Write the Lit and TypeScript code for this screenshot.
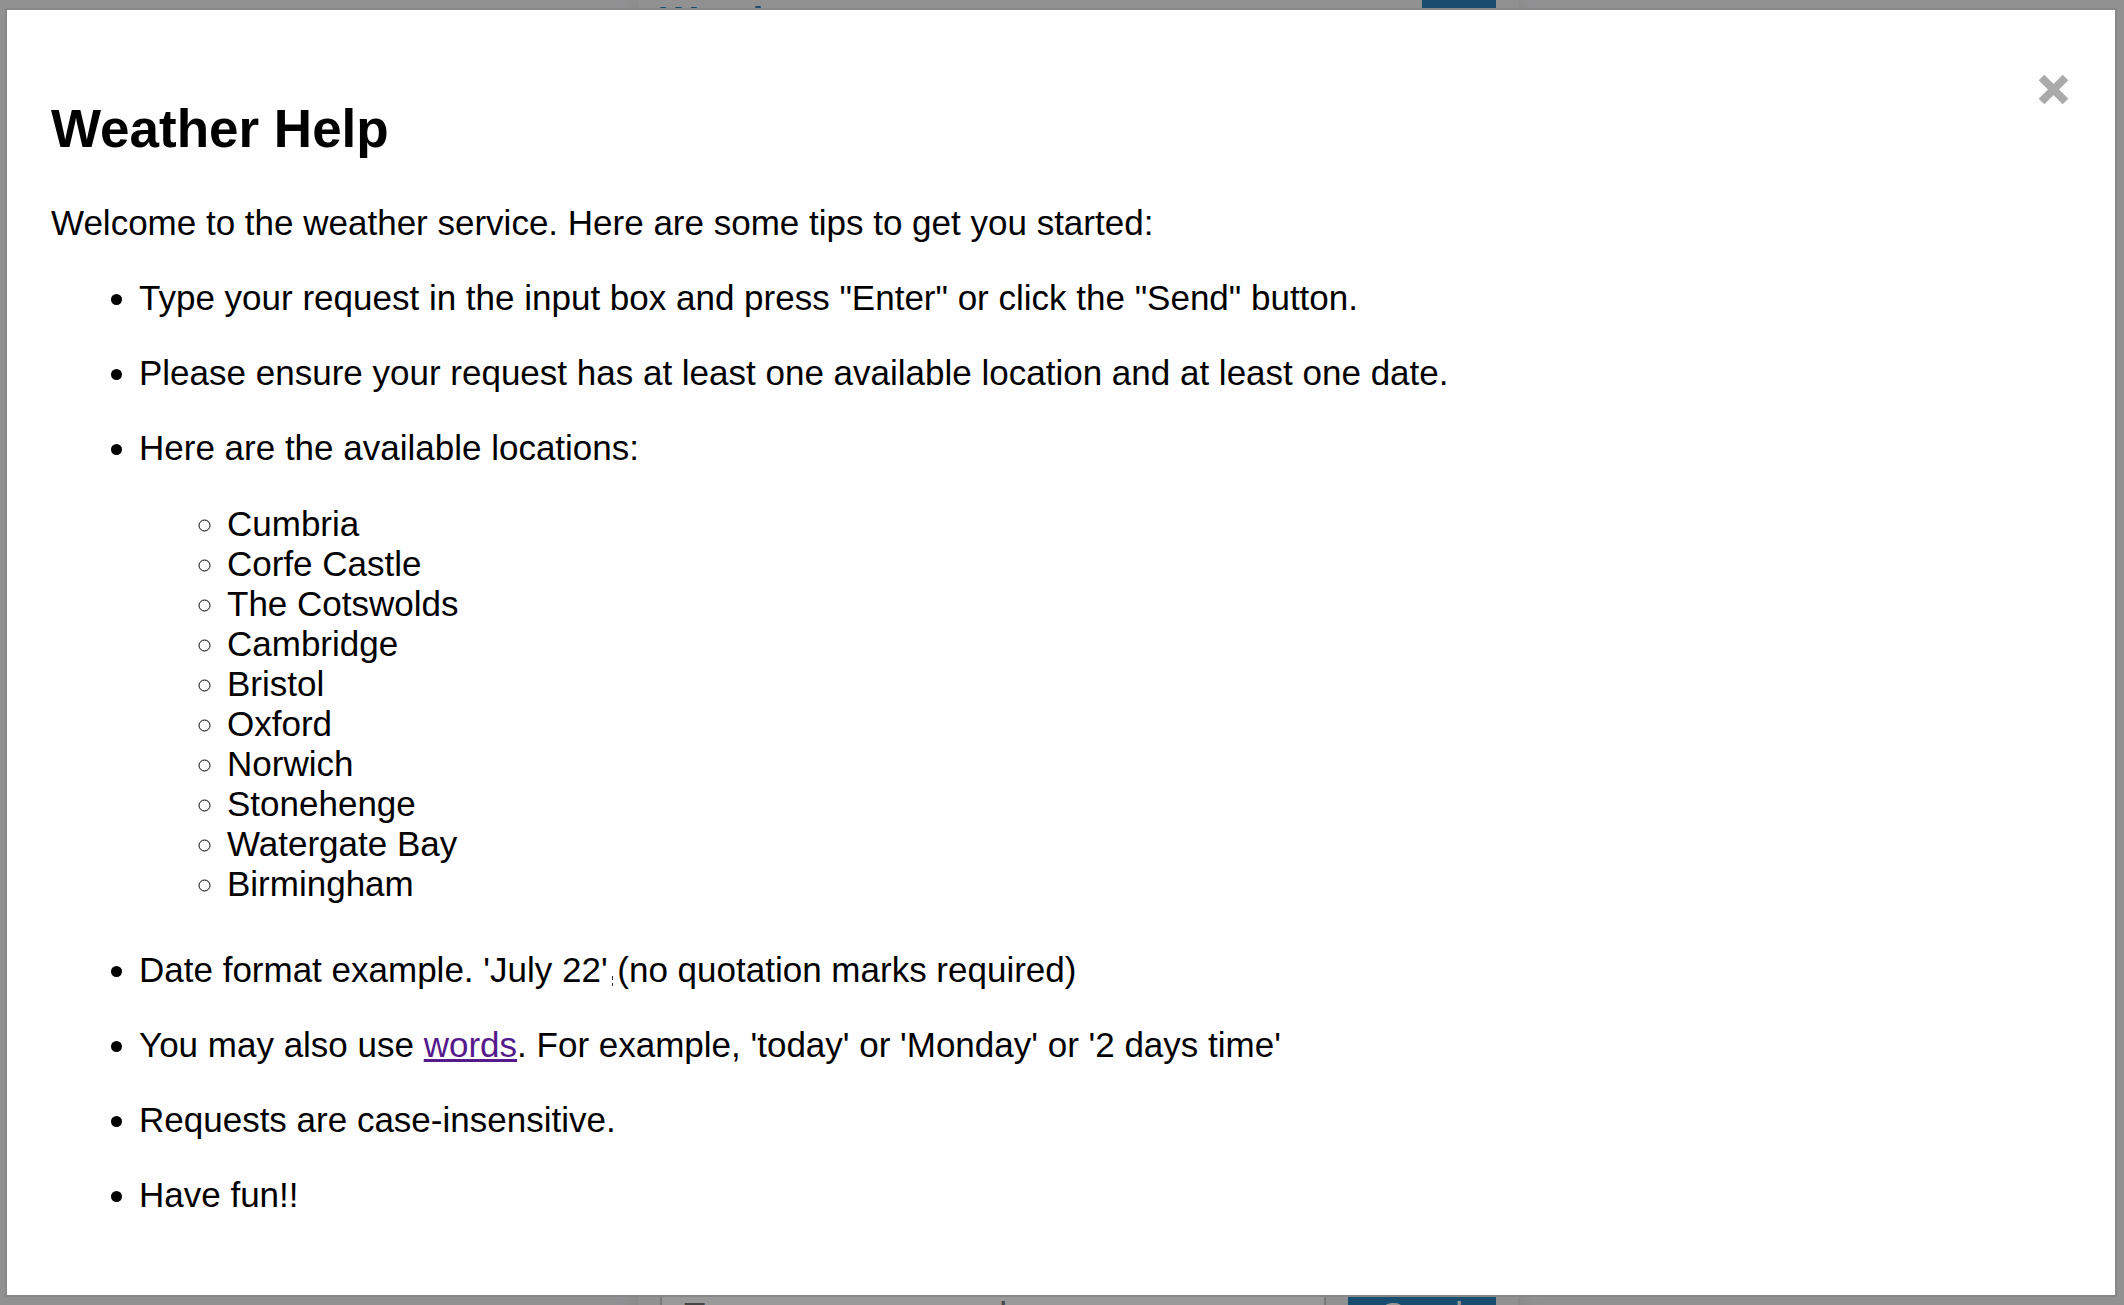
import { LitElement, html, css } from "lit";
import { customElement, property, state } from "lit/decorators.js";

const LOCATIONS = [
  "Cumbria",
  "Corfe Castle",
  "The Cotswolds",
  "Cambridge",
  "Bristol",
  "Oxford",
  "Norwich",
  "Stonehenge",
  "Watergate Bay",
  "Birmingham",
];

/** Chat panel that sits behind the help dialog. */
@customElement("weather-chat")
export class WeatherChat extends LitElement {
  static styles = css`
    :host {
      display: flex;
      flex-direction: column;
      justify-content: space-between;
      box-sizing: border-box;
      width: 100%;
      max-width: 880px;
      height: calc(100vh + 50px);
      padding: 0 22px;
      background: #f2f2f4;
      box-shadow: 0 0 22px rgba(0, 0, 0, 0.1);
    }
    .header,
    .entry {
      display: flex;
      align-items: flex-start;
      justify-content: space-between;
      gap: 22px;
    }
    .title {
      margin: 0;
      font-size: 39px;
      line-height: 42px;
      color: #2980b9;
    }
    .button {
      border: 0;
      padding: 0 33px;
      font: inherit;
      color: #fff;
      background: #2980b9;
    }
    .help {
      height: 74px;
      width: 74px;
      padding: 0;
    }
    .send,
    .message {
      height: 80px;
    }
    .message {
      flex: 1;
      min-width: 0;
      box-sizing: border-box;
      border: 2px solid #ccc;
      padding: 0 22px;
      font: inherit;
      background: #fff;
    }
    .message::placeholder {
      color: #757575;
    }
  `;

  render() {
    return html`
      <header class="header">
        <h3 class="title">Weather</h3>
        <button class="button help" type="button">?</button>
      </header>
      <form class="entry">
        <input class="message" type="text" aria-label="Message" placeholder="Type your message here" />
        <button class="button send" type="button">Send</button>
      </form>
    `;
  }
}

/** Modal window with usage tips. */
@customElement("help-dialog")
export class HelpDialog extends LitElement {
  @property({ attribute: false }) locations: string[] = [];

  static styles = css`
    :host {
      position: fixed;
      inset: 0;
      overflow: auto;
      box-sizing: border-box;
      padding: 8px 7px 8px 5px;
      background: rgba(0, 0, 0, 0.4);
    }
    .dialog {
      display: flow-root;
      border: 2px solid #888;
      padding: 44px 44px 80px;
      color: #000;
      background: #fefefe;
    }
    .close {
      float: right;
      display: flex;
      align-items: center;
      height: 70px;
      border: 0;
      padding: 0;
      color: #aaa;
      background: none;
      cursor: pointer;
    }
    .cross {
      width: 36px;
      height: 36px;
    }
    .heading {
      margin: 44px 0;
      font-size: 53px;
      line-height: 61px;
    }
    .text {
      margin: 35px 0;
    }
    .tips {
      margin: 35px 0 0;
      padding-left: 88px;
    }
    .tips > li:last-child .text {
      margin-bottom: 0;
    }
    .places {
      margin: 36px 0 46px;
      padding-left: 88px;
      list-style-type: circle;
    }
    .link {
      color: #551a8b;
    }
    .speck {
      position: relative;
    }
    .speck::after {
      content: "";
      position: absolute;
      left: 4px;
      bottom: 3px;
      width: 1px;
      height: 3px;
      border: solid #333;
      border-width: 4px 0 3px;
    }
  `;

  private close() {
    this.dispatchEvent(new CustomEvent("close"));
  }

  render() {
    return html`
      <section class="dialog" role="dialog" aria-labelledby="heading">
        <button class="close" type="button" aria-label="Close" @click=${this.close}>
          <svg class="cross" viewBox="0 0 36 36" aria-hidden="true">
            <path d="M6.5 6.5 30.5 30.5M30.5 6.5 6.5 30.5" fill="none" stroke="currentColor" stroke-width="8" />
          </svg>
        </button>
        <h2 class="heading" id="heading">Weather Help</h2>
        <p class="text">Welcome to the weather service. Here are some tips to get you started:</p>
        <ul class="tips">
          <li><p class="text">Type your request in the input box and press "Enter" or click the "Send" button.</p></li>
          <li><p class="text">Please ensure your request has at least one available location and at least one date.</p></li>
          <li>
            <p class="text">Here are the available locations:</p>
            <ul class="places">
              ${this.locations.map((name) => html`<li>${name}</li>`)}
            </ul>
          </li>
          <li><p class="text">Date format example. 'July 22'<span class="speck"> </span>(no quotation marks required)</p></li>
          <li><p class="text">You may also use <a class="link" href="#words">words</a>. For example, 'today' or 'Monday' or '2 days time'</p></li>
          <li><p class="text">Requests are case-insensitive.</p></li>
          <li><p class="text">Have fun!!</p></li>
        </ul>
      </section>
    `;
  }
}

@customElement("app-root")
export class AppRoot extends LitElement {
  @state() private helpOpen = true;

  static styles = css`
    :host {
      display: flex;
      justify-content: center;
      box-sizing: border-box;
      height: 100vh;
      padding-left: 32px;
      overflow: hidden;
      font: 35px/40px "Liberation Sans", Arial, sans-serif;
      background: #f2f2f4;
    }
  `;

  render() {
    return html`
      <weather-chat></weather-chat>
      ${this.helpOpen
        ? html`<help-dialog .locations=${LOCATIONS} @close=${() => (this.helpOpen = false)}></help-dialog>`
        : null}
    `;
  }
}
